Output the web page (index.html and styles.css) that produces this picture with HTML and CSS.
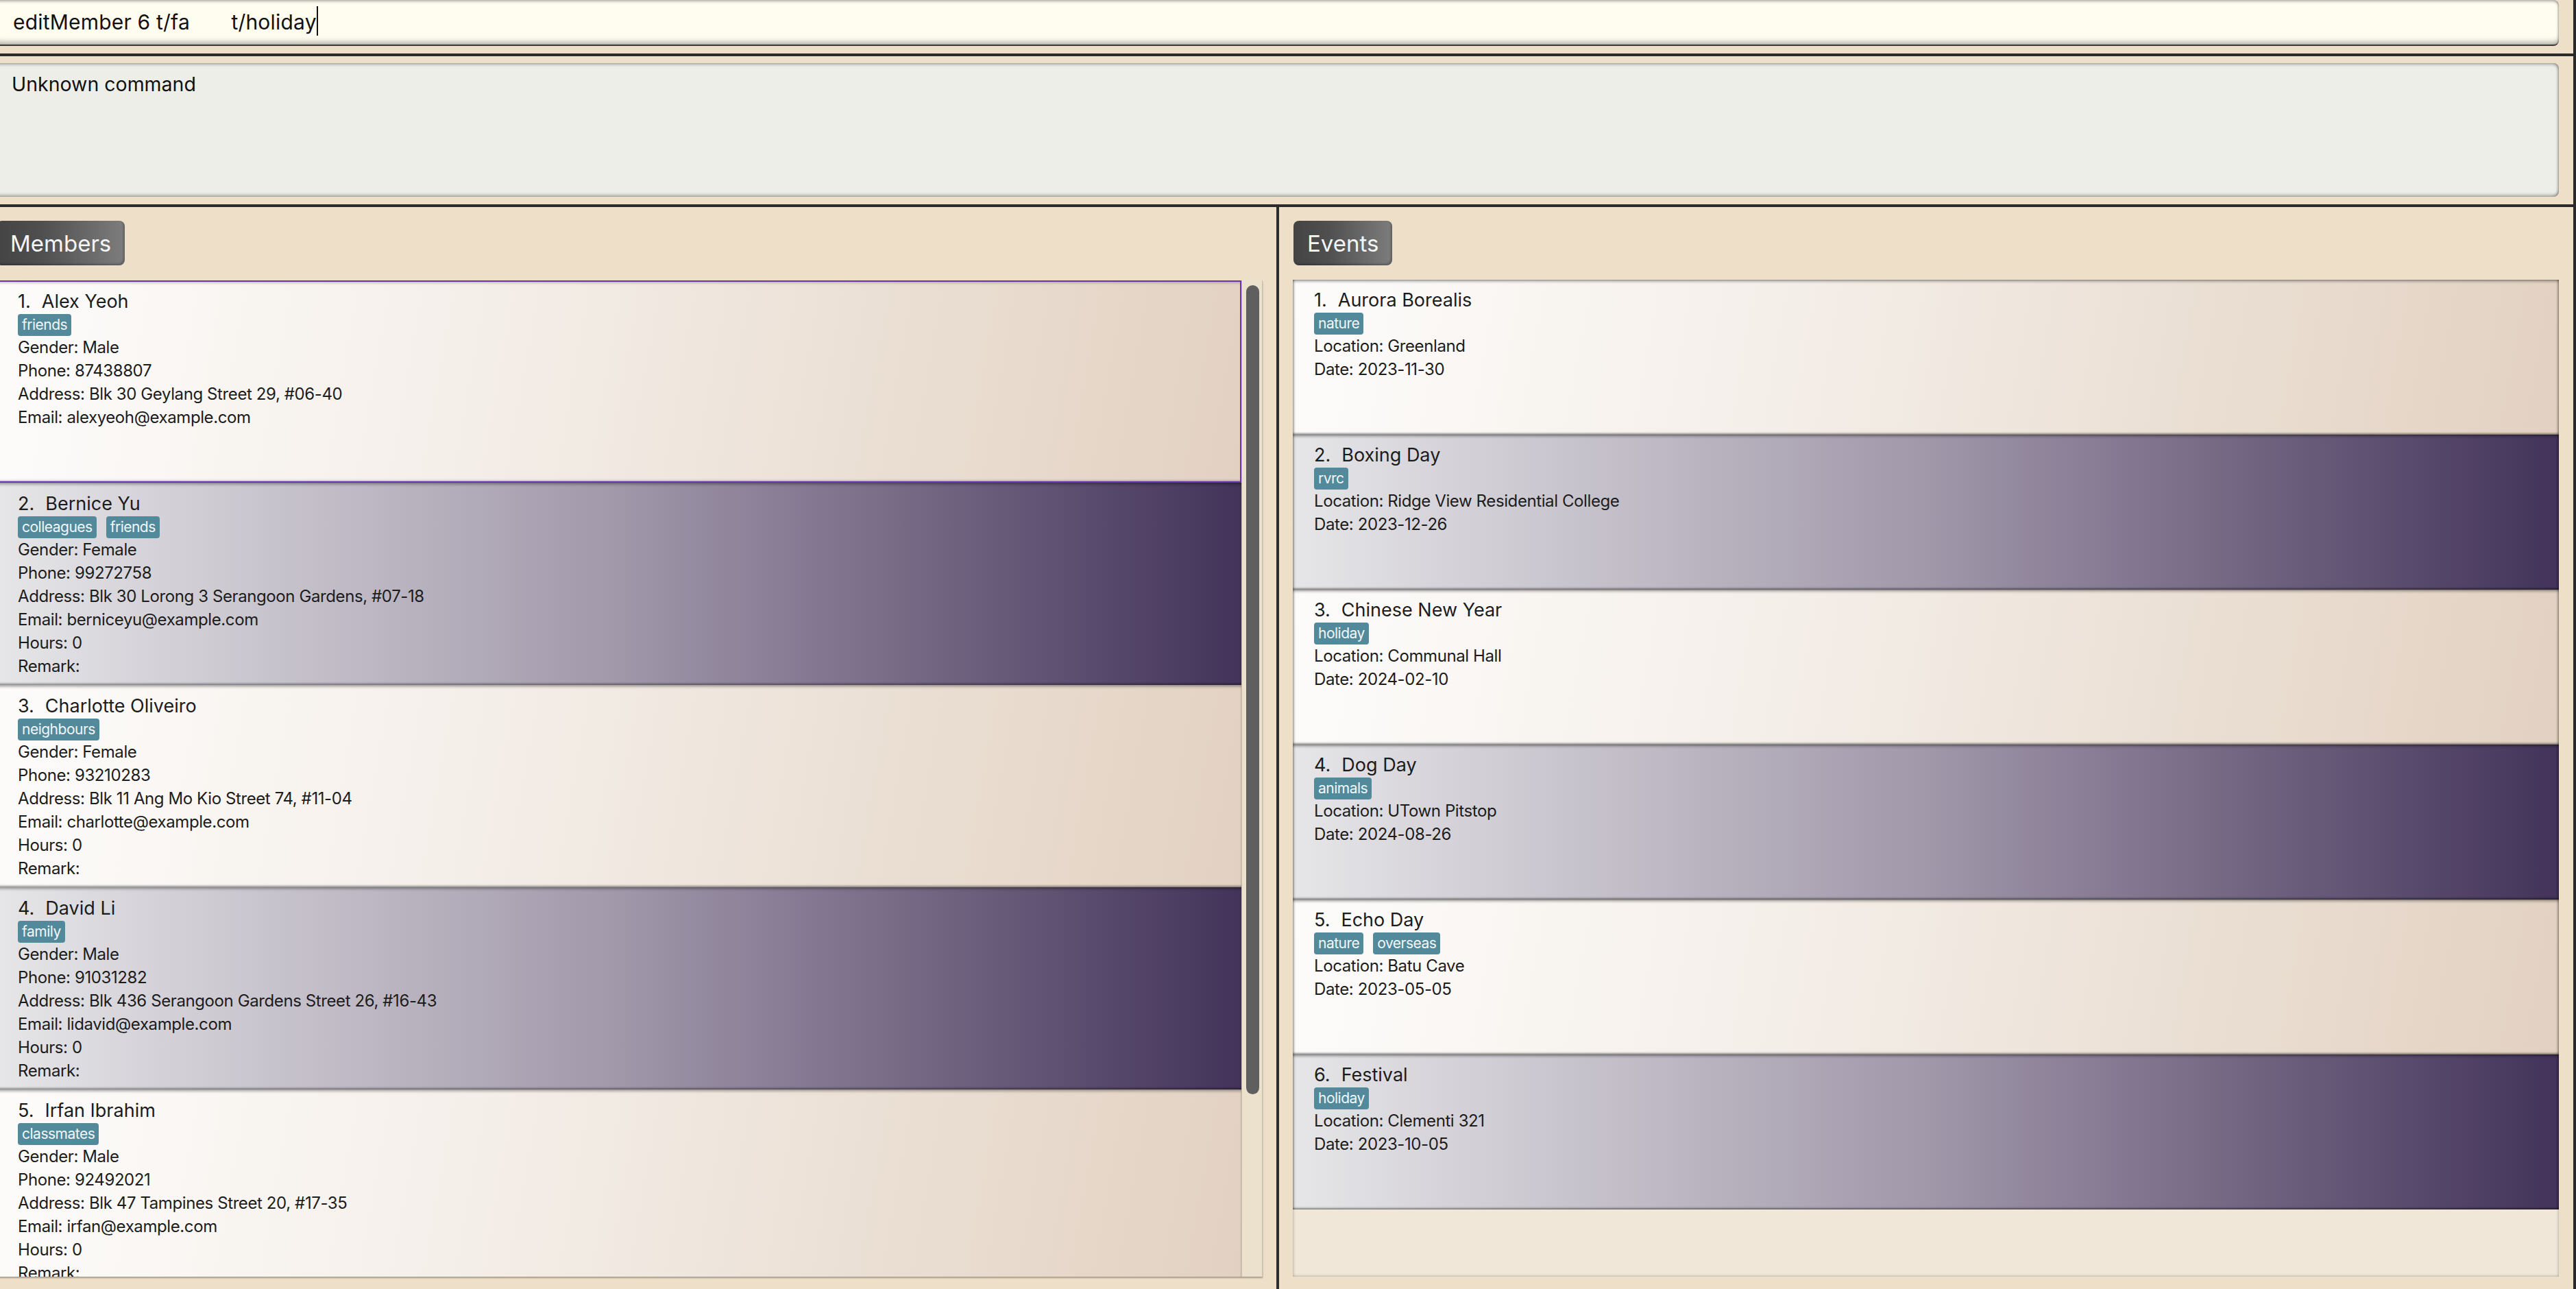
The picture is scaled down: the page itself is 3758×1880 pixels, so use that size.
FILE: index.html
```html
<!DOCTYPE html>
<html lang="en">
<head>
<meta charset="utf-8">
<title>Address Book</title>
<link rel="stylesheet" href="styles.css">
</head>
<body>
<div class="app">
  <div class="cmd-area">
    <div class="cmd-box"><span class="cmd-text">editMember 6 t/fa       t/holiday</span><span class="caret"></span></div>
  </div>
  <div class="hline"></div>
  <div class="result-area">
    <div class="result-box">Unknown command</div>
  </div>
  <div class="hline"></div>
  <div class="main">
    <section class="panel panel-left">
      <div class="header">Members</div>
      <div class="list members">
        <div class="cards">
          <div class="card odd selected">
            <div class="title"><span>1.</span><span>Alex Yeoh</span></div>
            <div class="tags"><span class="tag">friends</span></div>
            <div class="line">Gender: Male</div>
            <div class="line">Phone: 87438807</div>
            <div class="line">Address: Blk 30 Geylang Street 29, #06-40</div>
            <div class="line">Email: alexyeoh@example.com</div>
          </div>
          <div class="card even">
            <div class="title"><span>2.</span><span>Bernice Yu</span></div>
            <div class="tags"><span class="tag">colleagues</span><span class="tag">friends</span></div>
            <div class="line">Gender: Female</div>
            <div class="line">Phone: 99272758</div>
            <div class="line">Address: Blk 30 Lorong 3 Serangoon Gardens, #07-18</div>
            <div class="line">Email: berniceyu@example.com</div>
            <div class="line">Hours: 0</div>
            <div class="line">Remark:</div>
          </div>
          <div class="card odd">
            <div class="title"><span>3.</span><span>Charlotte Oliveiro</span></div>
            <div class="tags"><span class="tag">neighbours</span></div>
            <div class="line">Gender: Female</div>
            <div class="line">Phone: 93210283</div>
            <div class="line">Address: Blk 11 Ang Mo Kio Street 74, #11-04</div>
            <div class="line">Email: charlotte@example.com</div>
            <div class="line">Hours: 0</div>
            <div class="line">Remark:</div>
          </div>
          <div class="card even">
            <div class="title"><span>4.</span><span>David Li</span></div>
            <div class="tags"><span class="tag">family</span></div>
            <div class="line">Gender: Male</div>
            <div class="line">Phone: 91031282</div>
            <div class="line">Address: Blk 436 Serangoon Gardens Street 26, #16-43</div>
            <div class="line">Email: lidavid@example.com</div>
            <div class="line">Hours: 0</div>
            <div class="line">Remark:</div>
          </div>
          <div class="card odd">
            <div class="title"><span>5.</span><span>Irfan Ibrahim</span></div>
            <div class="tags"><span class="tag">classmates</span></div>
            <div class="line">Gender: Male</div>
            <div class="line">Phone: 92492021</div>
            <div class="line">Address: Blk 47 Tampines Street 20, #17-35</div>
            <div class="line">Email: irfan@example.com</div>
            <div class="line">Hours: 0</div>
            <div class="line">Remark:</div>
          </div>
        </div>
        <div class="track"><div class="thumb"></div></div>
      </div>
    </section>
    <div class="divider"></div>
    <section class="panel panel-right">
      <div class="header">Events</div>
      <div class="list events">
        <div class="cards">
          <div class="card odd">
            <div class="title"><span>1.</span><span>Aurora Borealis</span></div>
            <div class="tags"><span class="tag">nature</span></div>
            <div class="line">Location: Greenland</div>
            <div class="line">Date: 2023-11-30</div>
          </div>
          <div class="card even">
            <div class="title"><span>2.</span><span>Boxing Day</span></div>
            <div class="tags"><span class="tag">rvrc</span></div>
            <div class="line">Location: Ridge View Residential College</div>
            <div class="line">Date: 2023-12-26</div>
          </div>
          <div class="card odd">
            <div class="title"><span>3.</span><span>Chinese New Year</span></div>
            <div class="tags"><span class="tag">holiday</span></div>
            <div class="line">Location: Communal Hall</div>
            <div class="line">Date: 2024-02-10</div>
          </div>
          <div class="card even">
            <div class="title"><span>4.</span><span>Dog Day</span></div>
            <div class="tags"><span class="tag">animals</span></div>
            <div class="line">Location: UTown Pitstop</div>
            <div class="line">Date: 2024-08-26</div>
          </div>
          <div class="card odd">
            <div class="title"><span>5.</span><span>Echo Day</span></div>
            <div class="tags"><span class="tag">nature</span><span class="tag">overseas</span></div>
            <div class="line">Location: Batu Cave</div>
            <div class="line">Date: 2023-05-05</div>
          </div>
          <div class="card even">
            <div class="title"><span>6.</span><span>Festival</span></div>
            <div class="tags"><span class="tag">holiday</span></div>
            <div class="line">Location: Clementi 321</div>
            <div class="line">Date: 2023-10-05</div>
          </div>
        </div>
      </div>
    </section>
  </div>
</div>
</body>
</html>
```
FILE: styles.css
```css
* { box-sizing: border-box; margin: 0; padding: 0; }
html, body { width: 3758px; height: 1880px; overflow: hidden; }
body {
  background: #eddfc8;
  font-family: Inter, "Noto Sans", sans-serif;
  color: #1c1c1c;
}
.app {
  width: 3758px;
  height: 1880px;
  border-right: 4px solid #2a2a2a;
  display: flex;
  flex-direction: column;
}
.cmd-area { flex: none; height: 78px; padding: 0 21px 11px 0; }
.cmd-box {
  height: 67px;
  margin-left: -8px;
  background: #fffdf0;
  border-radius: 8px;
  border-bottom: 2px solid #3a3a3a;
  box-shadow: inset 0 3px 4px -1px rgba(0,0,0,.3), inset 0 -8px 8px -5px rgba(0,0,0,.35), inset -2px 0 3px -1px rgba(0,0,0,.25);
  padding-left: 27px;
  font-size: 30px;
  letter-spacing: 0.2px;
  line-height: 65px;
  white-space: pre;
  color: #111;
}
.caret {
  display: inline-block;
  width: 2px;
  height: 43px;
  background: #111;
  vertical-align: -9px;
}
.hline { flex: none; height: 4px; background: #2b2b2b; }
.result-area { flex: none; height: 216px; padding: 10px 21px 11px 0; }
.result-box {
  height: 195px;
  margin-left: -8px;
  background: #eeeee8;
  border-radius: 8px;
  box-shadow: inset 0 3px 4px -1px rgba(0,0,0,.3), inset 0 -4px 5px -2px rgba(0,0,0,.35), inset -3px 0 4px -2px rgba(0,0,0,.3);
  padding: 13px 0 0 25px;
  font-size: 28.5px;
  line-height: 36px;
  color: #111;
}
.main { flex: 1; display: flex; min-height: 0; }
.panel { display: flex; flex-direction: column; min-height: 0; }
.panel-left { flex: none; width: 1867px; margin-left: -5px; padding: 20px 20px 18px 0; }
.panel-right { flex: 1; min-width: 0; padding: 20px 21px 18px 20px; }
.divider { flex: none; width: 4px; background: #2b2b2b; }
.header {
  flex: none;
  align-self: flex-start;
  height: 65px;
  padding: 0 20px;
  border-radius: 8px;
  background: linear-gradient(to right, #444 0%, #4f4f4f 35%, #7d7d7d 100%);
  box-shadow: inset -2px -2px 3px rgba(0,0,0,.25);
  color: #f5f5f5;
  font-size: 33px;
  line-height: 67px;
}
.panel-right .header { margin-left: 1px; }
.list { flex: 1; min-height: 0; margin-top: 21px; display: flex; overflow: hidden; }
.members { margin-top: 22px; box-shadow: 0 2px 2px rgba(0,0,0,.3); }
.events {
  background: #f0e7d8;
  box-shadow: inset 0 0 4px rgba(0,0,0,.35);
}
.cards { flex: 1; min-width: 0; display: flex; flex-direction: column; overflow: hidden; }
.track {
  flex: none;
  width: 31px;
  background: #ece1cd;
  border-left: 1px solid #cbbfa9;
  border-right: 1px solid #cbbfa9;
  padding: 7px 4px 0 6px;
}
.thumb { height: 1180px; background: #5f5f5f; border-radius: 10px; }
.card {
  flex: none;
  padding: 14px 0 0 31px;
  box-shadow: inset 0 4px 4px -2px rgba(0,0,0,.4), inset 0 -3px 3px -1px rgba(0,0,0,.4);
}
.members .card { height: 295px; }
.events .card {
  height: 226px;
  padding-top: 13px;
  box-shadow: inset 0 4px 4px -2px rgba(0,0,0,.4), inset 0 -3px 3px -1px rgba(0,0,0,.4), inset 3px 0 3px -1px rgba(0,0,0,.3), inset -3px 0 3px -1px rgba(0,0,0,.3);
}
.odd { background: linear-gradient(100deg, #fdfcfb 0%, #f4eee8 40%, #e2d1c1 100%); }
.even { background: linear-gradient(to right, #e6e6e8 0%, #a198aa 50%, #43335a 100%); }
.members .card.selected {
  box-shadow: inset 0 0 0 2px #6c34aa, inset 0 5px 4px -2px rgba(0,0,0,.3), inset 0 -4px 3px -1px rgba(0,0,0,.3);
}
.title { display: flex; gap: 16px; height: 34px; font-size: 27px; line-height: 34px; }
.tags { display: flex; gap: 14px; margin-top: 1px; height: 32px; }
.tag {
  background: #528a9c;
  color: #f3f6f7;
  font-size: 21px;
  letter-spacing: -0.5px;
  line-height: 32px;
  padding: 0 6px;
  border-radius: 4px;
}
.line { font-size: 24px; letter-spacing: -0.4px; line-height: 34px; white-space: nowrap; }
```
